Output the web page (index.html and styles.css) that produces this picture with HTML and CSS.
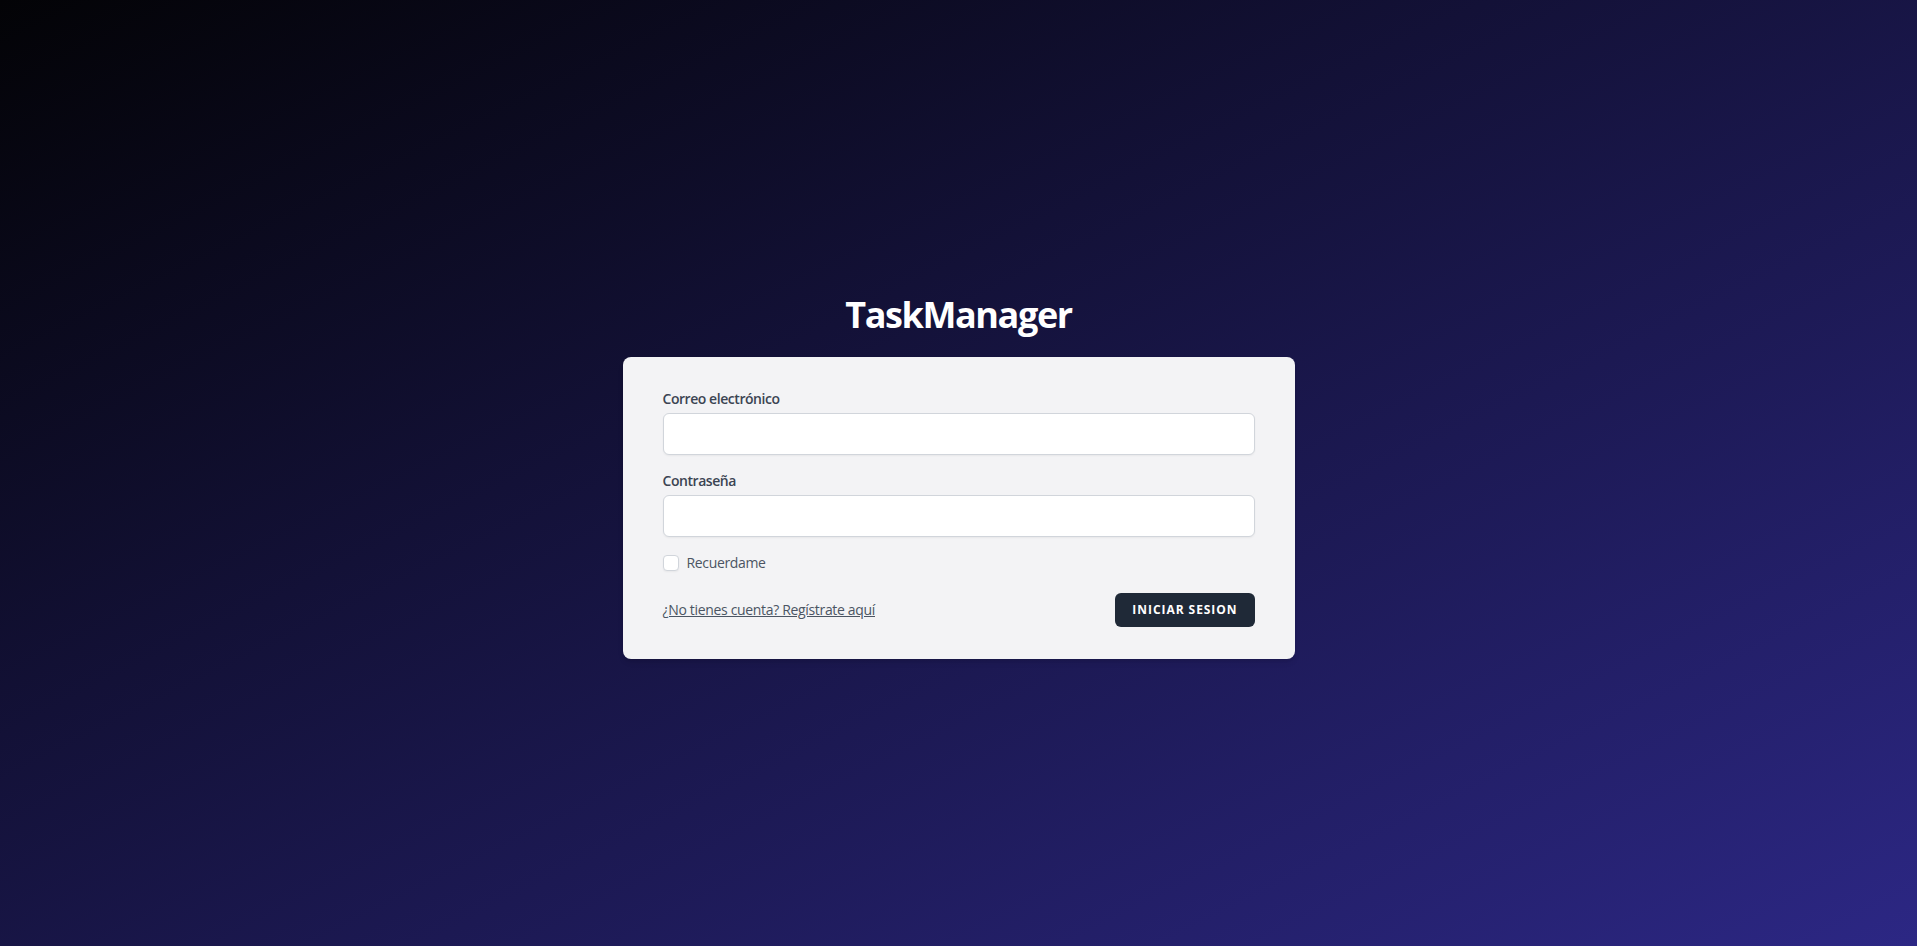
FILE: index.html
```html
<!DOCTYPE html>
<html lang="es">
<head>
<meta charset="utf-8">
<title>TaskManager</title>
<link rel="stylesheet" href="styles.css">
</head>
<body>
<main class="page">
  <h1 class="brand">TaskManager</h1>
  <form class="card">
    <div class="field">
      <label class="label" for="email">Correo electrónico</label>
      <input class="input" id="email" type="email">
    </div>
    <div class="field field-gap">
      <label class="label" for="password">Contraseña</label>
      <input class="input" id="password" type="password">
    </div>
    <label class="remember">
      <span class="checkbox"></span>
      <span class="remember-text">Recuerdame</span>
    </label>
    <div class="actions">
      <a class="link" href="#">¿No tienes cuenta? Regístrate aquí</a>
      <button class="btn" type="button">Iniciar sesion</button>
    </div>
  </form>
</main>
</body>
</html>
```

FILE: styles.css
```css
* { box-sizing: border-box; }
html, body { margin: 0; padding: 0; height: 100%; }
body {
  font-family: "Open Sans", "Noto Sans", sans-serif;
  background: linear-gradient(to bottom right, #030306 0%, #2c2784 100%);
  min-height: 100vh;
}
.page {
  min-height: 100vh;
  display: flex;
  flex-direction: column;
  align-items: center;
  justify-content: center;
  padding-top: 7px;
}
.brand {
  margin: 0 0 22px 0;
  font-size: 36px;
  line-height: 40px;
  font-weight: 700;
  color: #ffffff;
  letter-spacing: -1.4px;
}
.card {
  width: 672px;
  background: #f3f3f5;
  border-radius: 8px;
  padding: 32px 40px;
  box-shadow: 0 4px 6px -1px rgba(0,0,0,0.1), 0 2px 4px -2px rgba(0,0,0,0.1);
}
.field { display: flex; flex-direction: column; }
.field-gap { margin-top: 16px; }
.label {
  font-size: 14px;
  line-height: 20px;
  font-weight: 600;
  color: #3b4452;
  margin-bottom: 4px;
  letter-spacing: -0.45px;
}
.input {
  height: 42px;
  width: 100%;
  border: 1px solid #d1d5db;
  border-radius: 6px;
  background: #ffffff;
  box-shadow: 0 1px 2px rgba(0,0,0,0.05);
  font-size: 16px;
  padding: 8px 12px;
  outline: none;
}
.remember {
  display: flex;
  align-items: center;
  margin-top: 16px;
  height: 20px;
}
.checkbox {
  width: 16px;
  height: 16px;
  border: 1px solid #d1d5db;
  border-radius: 4px;
  background: #ffffff;
  box-shadow: 0 1px 2px rgba(0,0,0,0.05);
}
.remember-text {
  margin-left: 8px;
  font-size: 14px;
  line-height: 20px;
  color: #4b5563;
  letter-spacing: -0.35px;
}
.actions {
  display: flex;
  align-items: center;
  justify-content: space-between;
  margin-top: 20px;
}
.link {
  font-size: 14px;
  line-height: 20px;
  color: #4b5563;
  text-decoration: underline;
  letter-spacing: -0.33px;
}
.btn {
  height: 34px;
  padding: 0 16px;
  background: #1f2937;
  color: #ffffff;
  border: 1px solid transparent;
  border-radius: 6px;
  font-family: inherit;
  font-size: 12px;
  font-weight: 700;
  letter-spacing: 0.95px;
  text-transform: uppercase;
}
```
